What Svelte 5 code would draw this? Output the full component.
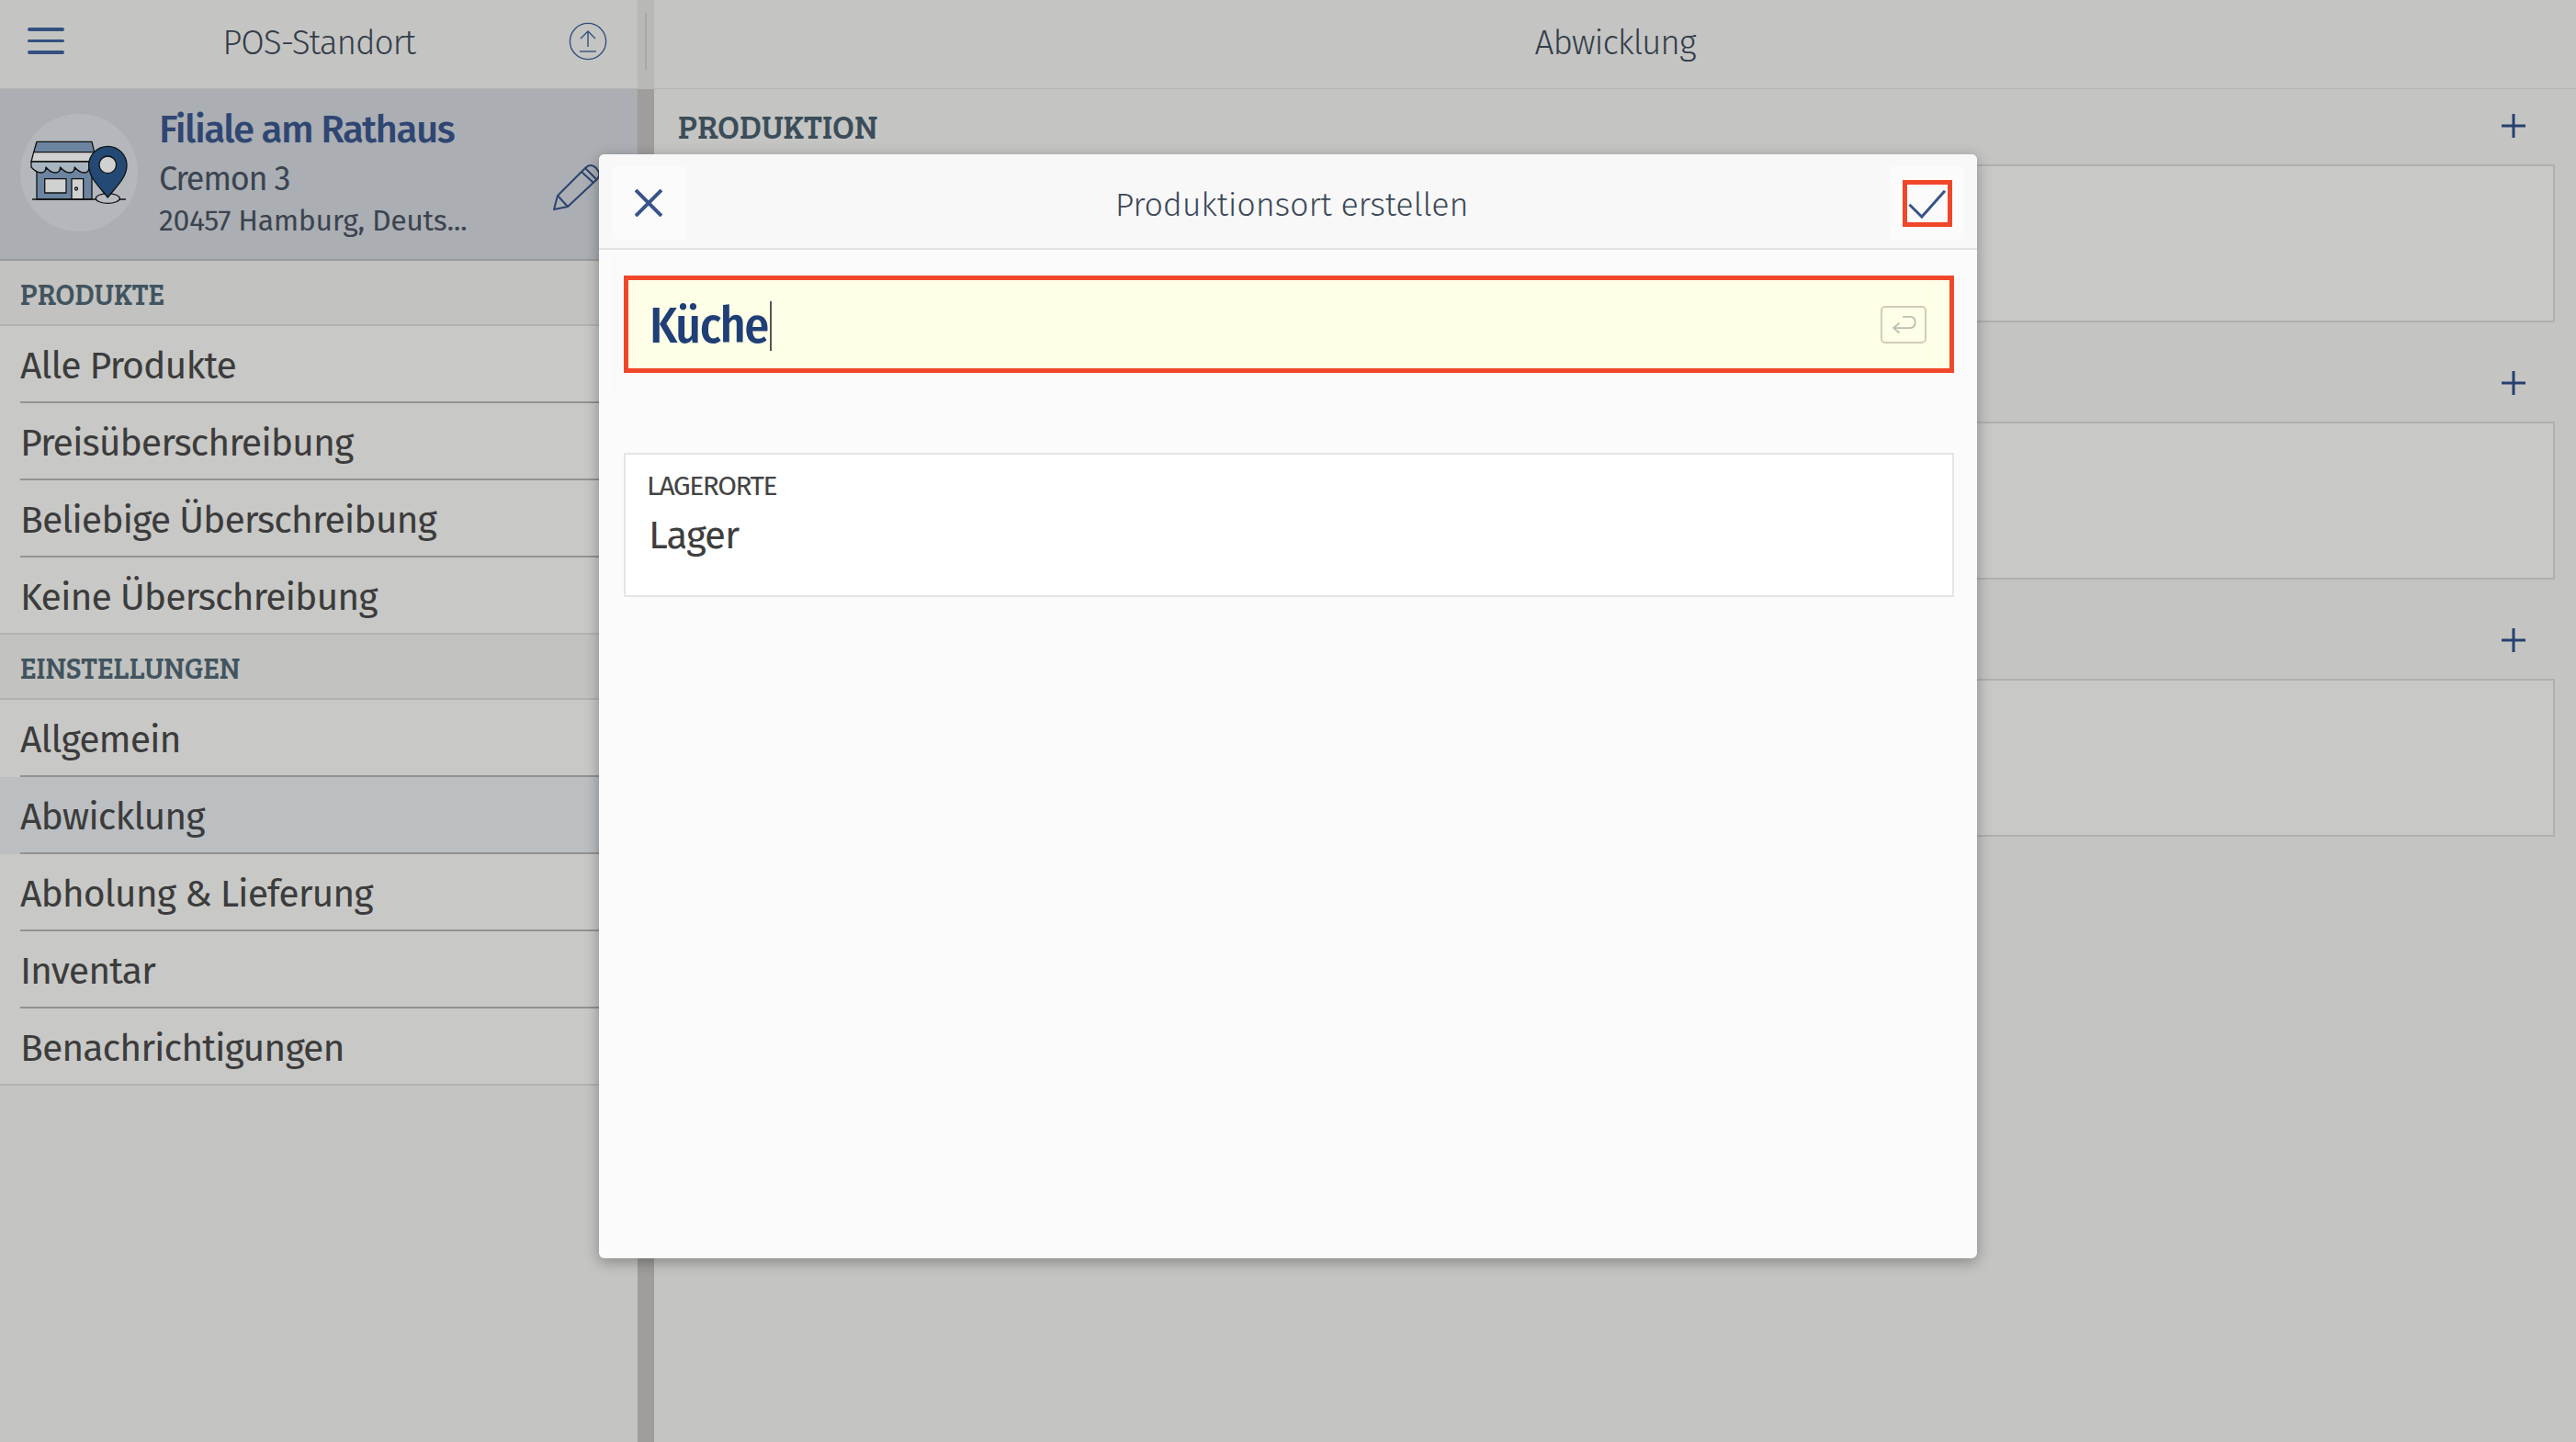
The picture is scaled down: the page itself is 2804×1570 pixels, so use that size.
<script>
	let produkte = ['Alle Produkte', 'Preisüberschreibung', 'Beliebige Überschreibung', 'Keine Überschreibung']
	let einstellungen = ['Allgemein', 'Abwicklung', 'Abholung & Lieferung', 'Inventar', 'Benachrichtigungen']
	let selected = 'Abwicklung'
	let sections = ['PRODUKTION', '', '']
</script>

<div class="page">
	<aside class="sidebar">
		<header class="sidebar-head">
			<button class="icon-btn" aria-label="Menü">
				<span class="bar"></span><span class="bar"></span><span class="bar"></span>
			</button>
			<h2>POS-Standort</h2>
			<svg class="upload" viewBox="0 0 42 42" fill="none" stroke="#34507f" stroke-width="1.4">
				<circle cx="21" cy="21" r="19.6" />
				<path d="M21 10V27M13 18L21 10L29 18" />
				<path d="M12 32H30" />
			</svg>
		</header>

		<div class="profile">
			<div class="avatar">
				<svg viewBox="22 24 128 128" stroke="#111" stroke-width="1.3" stroke-linejoin="round">
					<path d="M40 54.3H100L102.7 65.7H36.7Z" fill="#6b84a0" />
					<rect x="40" y="84" width="60" height="33" fill="#6b84a0" />
					<path d="M36.7 65.7H102.7L100 76H34Z" fill="#d0d1d1" />
					<path d="M34 76H97V82Q97 88 91.7 88T81.2 82Q81.2 88 76 88T65.5 82Q65.5 88 60.2 88T50 82Q50 88 44.7 88T34 82Z" fill="#a9b6c2" />
					<rect x="48.7" y="94.7" width="23.3" height="15.3" fill="#d0d1d1" />
					<rect x="78" y="94.7" width="12.7" height="22.3" fill="#d0d1d1" />
					<circle cx="83" cy="105.5" r="1.5" fill="#d0d1d1" />
					<path d="M35 117H137" fill="none" />
					<ellipse cx="117.3" cy="116" rx="13" ry="5.3" fill="#b9bdc2" />
					<path d="M117.3 115C109 104 96.6 94 96.6 80A20.7 20.7 0 0 1 138 80C138 94 125.6 104 117.3 115Z" fill="#234974" />
					<circle cx="117.3" cy="79.3" r="9.3" fill="#d0d1d1" />
				</svg>
			</div>
			<div class="address">
				<div class="name">Filiale am Rathaus</div>
				<div class="street">Cremon 3</div>
				<div class="city">20457 Hamburg, Deuts...</div>
			</div>
			<svg class="pencil" viewBox="600 160 54 56" fill="none" stroke="#2c4470" stroke-width="2" stroke-linejoin="round">
				<path d="M603 213L607 198L637 168Q643 162 649 168L651 171Q654 176 650 180L618 210Z" />
				<path d="M607 198L618 210M633 172L646 184M637 168L650 181" />
			</svg>
		</div>

		<div class="section-label">PRODUKTE</div>
		{#each produkte as item, i}
			<div class="row" class:last={i === produkte.length - 1}><span>{item}</span></div>
		{/each}

		<div class="section-label">EINSTELLUNGEN</div>
		{#each einstellungen as item, i}
			<div class="row" class:active={item === selected} class:last={i === einstellungen.length - 1}><span>{item}</span></div>
		{/each}
	</aside>

	<div class="divider"><i></i></div>

	<main class="main">
		<header class="main-head"><h2>Abwicklung</h2></header>
		<div class="main-body">
			{#each sections as title}
				<section>
					<div class="sec-head">
						<h3>{title}</h3>
						<svg class="plus" viewBox="0 0 26 26" stroke="#27406f" stroke-width="3"><path d="M13 0V26M0 13H26" /></svg>
					</div>
					<div class="card"></div>
				</section>
			{/each}
		</div>
	</main>

	<div class="modal">
		<div class="modal-head">
			<button class="modal-btn" aria-label="Schließen">
				<svg width="30" height="30" viewBox="0 0 30 30" stroke="#39548a" stroke-width="4"><path d="M1 1L29 29M29 1L1 29" /></svg>
			</button>
			<h2>Produktionsort erstellen</h2>
			<button class="modal-btn" aria-label="Speichern">
				<span class="check-box">
					<svg width="44" height="41" viewBox="0 0 44 41" fill="none" stroke="#39548a" stroke-width="3"><path d="M2.4 21.7L15.9 35L41 6.7" /></svg>
				</span>
			</button>
		</div>
		<div class="field-wrap">
			<div class="field">
				<span class="value">Küche</span><span class="caret"></span>
				<span class="enter">
					<svg viewBox="0 0 50 41" fill="none" stroke="#bdbcb0" stroke-width="2"><path d="M24 11H33Q39 11 39 17.5Q39 24.5 33 24.5H13M20 18.5L13 24.5L20 30.5" /></svg>
				</span>
			</div>
		</div>
		<div class="storage">
			<div class="storage-label">LAGERORTE</div>
			<div class="storage-value">Lager</div>
		</div>
	</div>
</div>

<style>
	:global(body) {
		margin: 0;
		background: #c4c4c2;
	}

	h2, h3 {
		margin: 0;
		font-weight: 400;
	}

	button {
		border: 0;
		padding: 0;
		background: none;
	}

	.page {
		position: relative;
		display: flex;
		width: 2804px;
		height: 1570px;
		overflow: hidden;
		font-family: "Fira Sans", "Open Sans", sans-serif;
		background: #c4c4c2;
	}

	.sidebar {
		width: 694px;
		display: flex;
		flex-direction: column;
	}

	.sidebar-head {
		height: 97px;
		flex: none;
		box-sizing: border-box;
		padding-bottom: 4px;
		display: flex;
		align-items: center;
		justify-content: center;
		position: relative;
		border-bottom: 1px solid #b4b4b2;
	}

	.sidebar-head h2, .main-head h2 {
		font-size: 37px;
		font-weight: 300;
		letter-spacing: -1.1px;
		color: #333d49;
	}

	.icon-btn {
		position: absolute;
		left: 30px;
		top: 30px;
		width: 40px;
		display: flex;
		flex-direction: column;
		gap: 9px;
	}

	.bar {
		display: block;
		height: 3.5px;
		border-radius: 2px;
		background: #34517f;
	}

	.upload {
		position: absolute;
		left: 619px;
		top: 24px;
		width: 42px;
		height: 42px;
	}

	.profile {
		height: 187px;
		flex: none;
		box-sizing: border-box;
		display: flex;
		align-items: center;
		padding-left: 22px;
		background: #abaeb3;
		border-bottom: 2px solid #989a9e;
	}

	.avatar {
		width: 128px;
		height: 128px;
		margin-top: -3px;
		border-radius: 50%;
		background: #b4b8bd;
		flex: none;
	}

	.avatar svg {
		display: block;
		width: 128px;
		height: 128px;
	}

	.address {
		margin: -4px 0 0 23px;
		flex: 1;
	}

	.name {
		font-size: 42px;
		line-height: 56px;
		font-weight: 500;
		letter-spacing: -1.5px;
		color: #2f4672;
	}

	.street {
		margin-top: 2px;
		font-size: 36px;
		line-height: 48px;
		letter-spacing: -1.3px;
		color: #3b4450;
	}

	.city {
		margin-top: -2px;
		font-size: 32px;
		line-height: 46px;
		letter-spacing: -0.35px;
		color: #3b4450;
	}

	.pencil {
		width: 54px;
		height: 56px;
		margin: 26px 40px 0 0;
		flex: none;
	}

	.section-label {
		height: 71px;
		flex: none;
		box-sizing: border-box;
		padding: 2px 0 0 22px;
		display: flex;
		align-items: center;
		font-family: "Bree Serif", "DejaVu Serif Condensed", serif;
		font-size: 32px;
		color: #41545f;
		background: #c2c2c0;
		border-bottom: 2px solid #b2b2b0;
	}

	.row {
		height: 84px;
		flex: none;
		box-sizing: border-box;
		padding-left: 22px;
		background: #c8c8c6;
	}

	.row span {
		display: flex;
		align-items: center;
		height: 100%;
		box-sizing: border-box;
		padding-top: 4px;
		border-bottom: 2px solid #929290;
		font-size: 41px;
		letter-spacing: -1px;
		color: #3c3c3c;
	}

	.row.active {
		background: #bbbfc2;
	}

	.row.last {
		padding-left: 0;
		border-bottom: 2px solid #b2b2b0;
	}

	.row.last span {
		padding-left: 22px;
		border-bottom: 0;
	}

	.divider {
		width: 18px;
		flex: none;
		background: linear-gradient(#b8b8b6 0 97px, #9f9e9c 97px);
		position: relative;
	}

	.divider i {
		position: absolute;
		left: 8px;
		top: 14px;
		width: 2px;
		height: 62px;
		background: #a8a8a6;
	}

	.main {
		flex: 1;
		display: flex;
		flex-direction: column;
		background: #c4c4c2;
	}

	.main-head {
		height: 97px;
		flex: none;
		box-sizing: border-box;
		padding-bottom: 4px;
		display: flex;
		align-items: center;
		justify-content: center;
		border-bottom: 1px solid #b4b4b2;
	}

	.main-body {
		padding: 0 23px 0 26px;
		display: flex;
		flex-direction: column;
		gap: 26px;
	}

	.sec-head {
		height: 82px;
		box-sizing: border-box;
		padding: 0 32px 3px 0;
		display: flex;
		align-items: center;
		justify-content: space-between;
	}

	.sec-head h3 {
		font-family: "Bree Serif", "DejaVu Serif Condensed", serif;
		font-size: 36px;
		color: #3b4d59;
	}

	.plus {
		width: 26px;
		height: 26px;
	}

	.card {
		height: 172px;
		box-sizing: border-box;
		background: #c8c8c6;
		border: 2px solid #b0b0ae;
	}

	.modal {
		position: absolute;
		left: 652px;
		top: 168px;
		width: 1500px;
		height: 1202px;
		border-radius: 6px;
		background: #fbfbfb;
		box-shadow: 0 4px 16px rgba(0, 0, 0, 0.32);
		overflow: hidden;
	}

	.modal-head {
		height: 104px;
		box-sizing: border-box;
		display: flex;
		align-items: center;
		justify-content: space-between;
		padding: 4px 14px 0;
		background: #f8f8f9;
		border-bottom: 2px solid #e4e4e4;
	}

	.modal-head h2 {
		margin: 4px 0 0 8px;
		font-size: 36px;
		font-weight: 300;
		letter-spacing: -0.2px;
		color: #3d4857;
	}

	.modal-btn {
		width: 80px;
		height: 80px;
		display: flex;
		align-items: center;
		justify-content: center;
		background: #fbfbfc;
	}

	.check-box {
		width: 54px;
		height: 51px;
		box-sizing: border-box;
		display: flex;
		align-items: center;
		justify-content: center;
		border: 5px solid #f0472a;
	}

	.field-wrap {
		padding: 28px 13px 27px 13px;
		margin: 0 12px 0 14px;
		background: #fafafa;
	}

	.field {
		height: 106px;
		box-sizing: border-box;
		display: flex;
		align-items: center;
		padding: 0 25px 0 23px;
		background: #ffffe8;
		border: 5px solid #f0472a;
	}

	.value {
		padding-top: 4px;
		font-family: "Fira Sans Condensed", "Fira Sans", sans-serif;
		font-size: 54px;
		font-weight: 500;
		letter-spacing: -1.6px;
		color: #1f3f76;
	}

	.caret {
		width: 2px;
		height: 54px;
		margin: 4px 0 0 2px;
		background: #555;
	}

	.enter {
		margin-left: auto;
		width: 50px;
		height: 41px;
		box-sizing: border-box;
		border: 2px solid #cfcdb8;
		border-radius: 5px;
	}

	.enter svg {
		display: block;
		width: 46px;
		height: 37px;
	}

	.storage {
		margin: 60px 25px 0 27px;
		height: 157px;
		box-sizing: border-box;
		padding: 16px 23px 0;
		background: #fff;
		border: 2px solid #e5e5e5;
	}

	.storage-label {
		font-size: 30px;
		line-height: 36px;
		letter-spacing: -1.5px;
		color: #444;
	}

	.storage-value {
		margin: 7px 0 0 2px;
		font-size: 42px;
		line-height: 58px;
		letter-spacing: -1px;
		color: #3e3e3e;
	}
</style>
